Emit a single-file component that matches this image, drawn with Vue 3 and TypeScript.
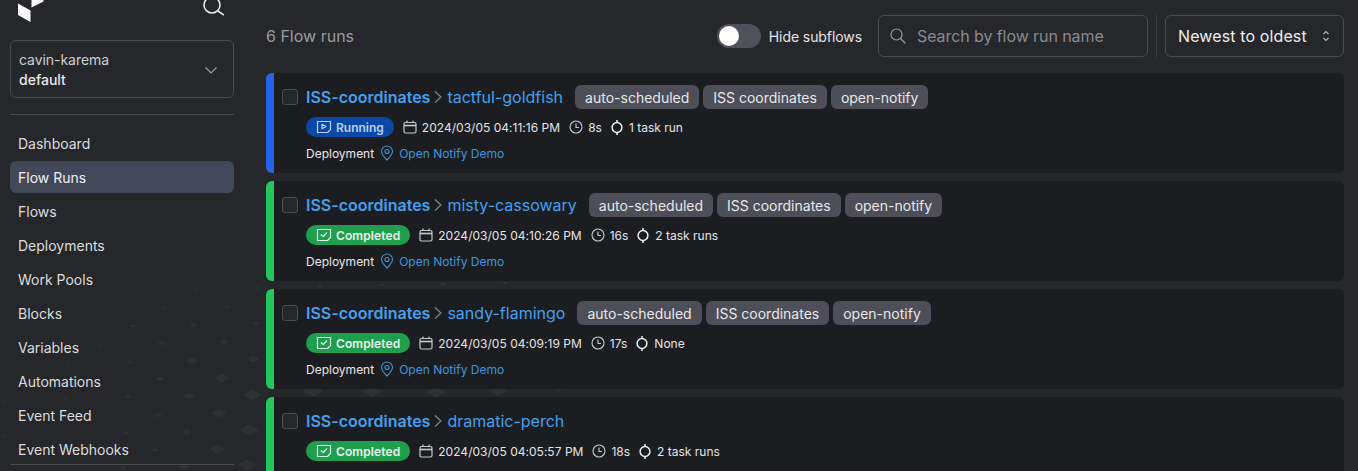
<script setup lang="ts">
interface Run {
  name: string
  state: 'Running' | 'Completed'
  date: string
  dur: string
  tasks: string
  tags: boolean
  deploy: boolean
}

const nav = ['Dashboard', 'Flow Runs', 'Flows', 'Deployments', 'Work Pools', 'Blocks', 'Variables', 'Automations', 'Event Feed', 'Event Webhooks']

const runs: Run[] = [
  { name: 'tactful-goldfish', state: 'Running', date: '2024/03/05 04:11:16 PM', dur: '8s', tasks: '1 task run', tags: true, deploy: true },
  { name: 'misty-cassowary', state: 'Completed', date: '2024/03/05 04:10:26 PM', dur: '16s', tasks: '2 task runs', tags: true, deploy: true },
  { name: 'sandy-flamingo', state: 'Completed', date: '2024/03/05 04:09:19 PM', dur: '17s', tasks: 'None', tags: true, deploy: true },
  { name: 'dramatic-perch', state: 'Completed', date: '2024/03/05 04:05:57 PM', dur: '18s', tasks: '2 task runs', tags: false, deploy: false },
]

const tags = ['auto-scheduled', 'ISS coordinates', 'open-notify']

const dots: [number, number, number][] = [
  [222, 378, 16], [252, 395, 20], [219, 413, 16], [249, 430, 20], [217, 449, 16], [247, 465, 20],
  [192, 361, 12], [189, 396, 12], [187, 432, 12], [184, 467, 12], [253, 359, 13],
  [162, 343, 9], [160, 379, 9], [158, 415, 9], [155, 450, 9], [194, 325, 9], [224, 342, 9],
  [133, 326, 6], [130, 362, 7], [128, 397, 7], [126, 433, 7], [123, 468, 7],
  [165, 308, 4], [101, 345, 4], [69, 363, 4], [66, 399, 4], [64, 434, 4], [96, 416, 4],
  [197, 289, 4], [227, 307, 6], [256, 323, 7], [258, 288, 5], [5, 401, 4], [3, 436, 4],
  [320, 286, 5], [382, 285, 5], [443, 284, 6], [505, 283, 5],
  [313, 391, 20], [372, 391, 20], [436, 392, 20], [498, 391, 17], [559, 389, 7],
]

function diamond(d: [number, number, number]): string {
  const [x, y, w] = d
  const h = w * 0.58
  return `${x - w / 2},${y} ${x},${y - h / 2} ${x + w / 2},${y} ${x},${y + h / 2}`
}
</script>

<template>
  <div class="page">
    <svg class="texture" width="1358" height="471" viewBox="0 0 1358 471" aria-hidden="true">
      <polygon v-for="(d, i) in dots" :key="i" :points="diamond(d)" fill="#2f3034" />
    </svg>

    <aside class="sidebar">
      <div class="top">
        <svg class="logo" width="26" height="22" viewBox="0 0 26 22">
          <polygon points="0,3.5 12.5,10.5 12.5,22 0,15" fill="#fff" />
          <polygon points="13.5,0 25.5,0 25.5,1.5 13.5,7.5" fill="#fff" />
        </svg>
        <svg class="search-top" width="24" height="24" viewBox="0 0 24 24" fill="none" stroke="#e8e8ea" stroke-width="1.6" stroke-linecap="round">
          <circle cx="10" cy="5" r="8" />
          <path d="M16 11l6 2.5" transform="rotate(12 16 11)" />
        </svg>
      </div>

      <div class="context">
        <div class="ctx-text">
          <div class="ctx-account">cavin-karema</div>
          <div class="ctx-workspace">default</div>
        </div>
        <svg width="14" height="14" viewBox="0 0 14 14" fill="none" stroke="#a0a1a6" stroke-width="1.2"><path d="M1.5 4.5L7 10l5.5-5.5" /></svg>
      </div>

      <div class="rule rule-top"></div>

      <nav class="nav">
        <a v-for="n in nav" :key="n" class="nav-item" :class="{ active: n === 'Flow Runs' }">{{ n }}</a>
      </nav>

      <div class="rule"></div>
    </aside>

    <main class="main">
      <header class="bar">
        <span class="count">6 Flow runs</span>
        <div class="spacer"></div>
        <div class="toggle"><span class="knob"></span></div>
        <span class="toggle-label">Hide subflows</span>
        <div class="search">
          <svg width="18" height="18" viewBox="0 0 18 18" fill="none" stroke="#9b9ca1" stroke-width="1.2" stroke-linecap="round">
            <circle cx="7.5" cy="7.5" r="5.5" />
            <path d="M11.5 11.5L16 16" />
          </svg>
          <span class="placeholder">Search by flow run name</span>
        </div>
        <div class="vsep"></div>
        <div class="select">
          <span>Newest to oldest</span>
          <svg width="10" height="14" viewBox="0 0 10 14" fill="none" stroke="#b5b6ba" stroke-width="1.1"><path d="M2.5 5L5 2.5 7.5 5M2.5 9L5 11.5 7.5 9" /></svg>
        </div>
      </header>

      <div class="list">
        <article v-for="r in runs" :key="r.name" class="card" :class="r.state === 'Running' ? 'is-running' : 'is-done'">
          <div class="check"></div>
          <div class="body">
            <div class="row-title">
              <span class="flow">ISS-coordinates</span>
              <svg class="crumb" width="12" height="16" viewBox="0 0 12 16" fill="none" stroke="#8a8b90" stroke-width="1.1"><path d="M3 2.5L9 8l-6 5.5" /></svg>
              <span class="run">{{ r.name }}</span>
              <div v-if="r.tags" class="tags">
                <span v-for="t in tags" :key="t" class="tag">{{ t }}</span>
              </div>
            </div>

            <div class="row-meta">
              <span class="pill" :class="r.state === 'Running' ? 'pill-run' : 'pill-done'">
                <svg v-if="r.state === 'Running'" width="16" height="14" viewBox="0 0 16 14" fill="none" stroke="currentColor" stroke-width="1.2" stroke-linejoin="round">
                  <path d="M1.5 1.5h13v8l-3 3h-10z" />
                  <path d="M6 4.2v4.6L10 6.5z" />
                </svg>
                <svg v-else width="16" height="14" viewBox="0 0 16 14" fill="none" stroke="currentColor" stroke-width="1.2" stroke-linejoin="round">
                  <path d="M1.5 1.5h13v8l-3 3h-10z" />
                  <path d="M5 6.5l2.2 2.2L11 4.5" />
                </svg>
                {{ r.state }}
              </span>
              <span class="meta date">
                <svg width="14" height="14" viewBox="0 0 14 14" fill="none" stroke="#c9cacd" stroke-width="1.2">
                  <rect x="1" y="2.5" width="12" height="10.5" rx="1.5" />
                  <path d="M1 5.5h12" stroke-width="1.6" />
                  <path d="M4 .5v2.5M10 .5v2.5" />
                </svg>
                {{ r.date }}
              </span>
              <span class="meta">
                <svg width="14" height="14" viewBox="0 0 14 14" fill="none" stroke="#c9cacd" stroke-width="1.1">
                  <circle cx="7" cy="7" r="6" />
                  <path d="M7 3.5V7.5H10" />
                </svg>
                {{ r.dur }}
              </span>
              <span class="meta tasks">
                <svg width="12" height="15" viewBox="0 0 12 15" fill="none" stroke="#f2f2f3" stroke-width="1.5">
                  <circle cx="6" cy="7.5" r="4.9" />
                  <path d="M6 0v2.5M6 12.5V15" />
                </svg>
                {{ r.tasks }}
              </span>
            </div>

            <div v-if="r.deploy" class="row-deploy">
              <span class="deploy-label">Deployment</span>
              <svg class="pin" width="14" height="16" viewBox="0 0 14 16" fill="none" stroke="#3f92d8" stroke-width="1.1">
                <path d="M7 15C4 12 1.5 9.5 1.5 6.5a5.5 5.5 0 0 1 11 0C12.5 9.5 10 12 7 15z" />
                <circle cx="7" cy="6.5" r="2" />
              </svg>
              <span class="deploy-link">Open Notify Demo</span>
            </div>
          </div>
        </article>
      </div>
    </main>
  </div>
</template>

<style>
html, body { margin: 0; background: #26272b; }
</style>

<style scoped>
.page {
  position: relative;
  display: flex;
  width: 1358px;
  height: 471px;
  overflow: hidden;
  background: #26272b;
  font-family: Inter, "Liberation Sans", sans-serif;
  color: #e8e8ea;
}
.texture { position: absolute; left: 0; top: 0; }
.sidebar {
  position: relative;
  box-sizing: border-box;
  width: 244px;
  flex: none;
  padding: 0 10px;
}
.top {
  display: flex;
  justify-content: space-between;
  height: 40px;
  padding: 0 8px;
}
.logo { flex: none; }
.search-top { flex: none; }
.context {
  box-sizing: border-box;
  height: 58px;
  border: 1px solid #4a4b50;
  border-radius: 6px;
  padding: 2px 15px 0 8px;
  display: flex;
  align-items: center;
  justify-content: space-between;
  font-size: 14px;
  line-height: 20px;
}
.ctx-account { color: #cfd0d3; letter-spacing: -0.05px; }
.ctx-workspace { color: #e8e8ea; font-weight: 500; }
.rule { height: 1px; background: #4a4b50; }
.rule-top { margin-top: 16px; }
.nav { display: flex; flex-direction: column; padding-top: 11px; height: 349px; box-sizing: border-box; }
.nav-item {
  box-sizing: border-box;
  height: 34px;
  padding: 0 8px;
  display: flex;
  align-items: center;
  flex: none;
  font-size: 14px;
  color: #dcdddf;
  border-radius: 6px;
}
.nav-item.active { height: 32px; margin: 1px 0; background: #434859; color: #f0f0f2; }
.main {
  position: relative;
  flex: 1;
  min-width: 0;
  box-sizing: border-box;
  padding: 15px 14px 0 22px;
}
.bar { display: flex; align-items: center; height: 42px; }
.count { font-size: 16px; color: #9a9ba0; }
.spacer { flex: 1; }
.toggle {
  box-sizing: border-box;
  width: 44px;
  height: 24px;
  border-radius: 12px;
  background: #505159;
  padding: 2px;
}
.knob { display: block; width: 20px; height: 20px; border-radius: 50%; background: #fff; }
.toggle-label { font-size: 14px; margin-left: 8px; color: #e4e4e6; letter-spacing: -0.08px; }
.search {
  box-sizing: border-box;
  width: 270px;
  height: 42px;
  margin-left: 16px;
  border: 1px solid #4a4b50;
  border-radius: 6px;
  display: flex;
  align-items: center;
  gap: 10px;
  padding: 0 10px;
}
.placeholder { font-size: 16px; color: #8a8b90; letter-spacing: -0.08px; }
.vsep { width: 1px; height: 42px; background: #3c3d42; margin: 0 8px; }
.select {
  box-sizing: border-box;
  width: 179px;
  height: 42px;
  border: 1px solid #4a4b50;
  border-radius: 6px;
  display: flex;
  align-items: center;
  justify-content: space-between;
  padding: 0 12px;
  font-size: 16px;
  letter-spacing: 0.12px;
  color: #eeeef0;
}
.list { display: flex; flex-direction: column; gap: 8px; margin-top: 16px; }
.card {
  box-sizing: border-box;
  height: 100px;
  flex: none;
  display: flex;
  background: #1c1d21;
  border-radius: 6px;
  border-left: 8px solid;
  padding: 16px 0 0 8px;
}
.is-running { border-left-color: #2563eb; }
.is-done { border-left-color: #22c55e; }
.check {
  box-sizing: border-box;
  width: 16px;
  height: 16px;
  flex: none;
  border: 1px solid #4d4e53;
  border-radius: 3px;
  background: #26272b;
}
.body { margin-left: 8px; min-width: 0; }
.row-title { display: flex; align-items: center; height: 16px; font-size: 16px; }
.flow { font-weight: 600; color: #46a0ee; }
.crumb { margin: 0 2px; flex: none; }
.run { color: #46a0ee; margin-left: 1px; }
.tags { display: flex; gap: 4px; margin-left: 12px; }
.tag {
  box-sizing: border-box;
  height: 24px;
  padding: 0 10px;
  background: #4d4e57;
  border-radius: 6px;
  font-size: 14px;
  line-height: 25px;
  color: #e8e8ea;
  white-space: nowrap;
}
.row-meta { display: flex; align-items: center; height: 20px; margin-top: 12px; gap: 9px; font-size: 12px; }
.pill {
  box-sizing: border-box;
  height: 20px;
  padding: 0 10px;
  border-radius: 10px;
  display: flex;
  align-items: center;
  gap: 4px;
  font-weight: 600;
}
.pill-run { background: #0b48a8; color: #b9d2f7; }
.pill-done { background: #1f9e4d; color: #e6f7ec; letter-spacing: 0.1px; }
.meta { display: flex; align-items: center; gap: 5px; color: #e4e4e6; white-space: nowrap; }
.date { letter-spacing: 0.02px; }
.tasks { gap: 6px; }
.row-deploy { display: flex; align-items: center; gap: 5px; margin-top: 6px; height: 20px; font-size: 12px; }
.deploy-label { color: #e8e8ea; }
.pin { margin-left: 1px; }
.deploy-link { color: #3f96dd; }
</style>
